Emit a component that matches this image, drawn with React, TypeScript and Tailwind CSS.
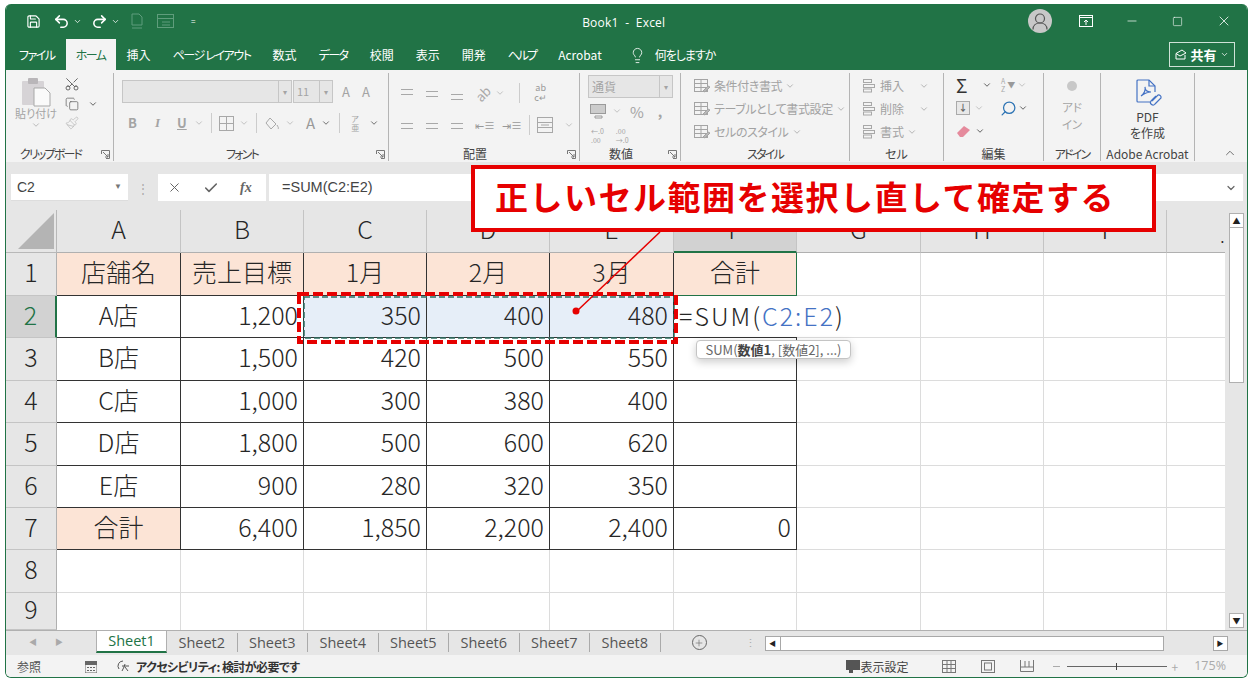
import type { ReactNode } from "react";
import {
  Check,
  ChevronDown,
  ChevronUp,
  Copy,
  Lightbulb,
  Minus,
  Paintbrush,
  Plus,
  Redo2,
  Save,
  Scissors,
  Search,
  Square,
  Undo2,
  X,
} from "lucide-react";

const colWidths = [51, 124, 123, 123, 123, 124, 123, 124, 123, 123, 58];
const rowHeights = [43, 42, 43, 42, 43, 42, 42, 43, 37];
const colNames = ["A", "B", "C", "D", "E", "F", "G", "H", "I", "."];

const tableRows = [
  ["店舗名", "売上目標", "1月", "2月", "3月", "合計"],
  ["A店", "1,200", "350", "400", "480", ""],
  ["B店", "1,500", "420", "500", "550", ""],
  ["C店", "1,000", "300", "380", "400", ""],
  ["D店", "1,800", "500", "600", "620", ""],
  ["E店", "900", "280", "320", "350", ""],
  ["合計", "6,400", "1,850", "2,200", "2,400", "0"],
];

// kana tabs are squeezed to the narrower width of the real ribbon font
const tabs = [
  { name: "ホーム", cls: "tracking-[-1.500px]" },
  { name: "挿入", cls: "" },
  { name: "ページ レイアウト", cls: "tracking-[-1.400px]" },
  { name: "数式", cls: "" },
  { name: "データ", cls: "tracking-[-1.500px]" },
  { name: "校閲", cls: "" },
  { name: "表示", cls: "" },
  { name: "開発", cls: "" },
  { name: "ヘルプ", cls: "tracking-[-2px]" },
  { name: "Acrobat", cls: "" },
];
const sheets = ["Sheet2", "Sheet3", "Sheet4", "Sheet5", "Sheet6", "Sheet7", "Sheet8"];

function Chev({ className = "text-[#8a8a8a]" }: { className?: string }) {
  return <ChevronDown size={10} strokeWidth={2} className={`shrink-0 ${className}`} />;
}

function Launcher() {
  return (
    <svg width="9" height="9" viewBox="0 0 9 9" className="absolute right-[3px] bottom-[2px] text-[#777]" fill="none" stroke="currentColor">
      <path d="M.5 4V.5H8.500V8.500H5" />
      <path d="M2 2l5 5M7 4v3H4" />
    </svg>
  );
}

function Group({
  width,
  label,
  launcher,
  squeeze,
  children,
}: {
  width: number;
  label: string;
  launcher?: boolean;
  squeeze?: boolean;
  children: ReactNode;
}) {
  return (
    <div className="relative flex h-[88px] shrink-0 flex-col border-r border-[#b4b4b4]" style={{ width }}>
      <div className="min-h-0 flex-1">{children}</div>
      <div
        className={`h-[14px] whitespace-nowrap text-center text-[12px] leading-[14px] text-[#444] ${launcher ? "pr-[18px]" : ""} ${
          squeeze ? "tracking-[-1.800px]" : ""
        }`}
      >
        {label}
      </div>
      {launcher && <Launcher />}
    </div>
  );
}

function LinesIcon({ kind = "center" }: { kind?: "center" | "left" | "right" | "top" | "bottom" }) {
  const x = kind === "center" ? [1, 3, 1] : kind === "right" ? [1, 5, 1] : [1, 1, 1];
  const y = kind === "top" ? 2 : kind === "bottom" ? 7 : 4;
  return (
    <svg width="14" height="13" viewBox="0 0 14 13" className="text-[#a8a8a8]" stroke="currentColor">
      {[0, 2.500, 5].map((d, i) => (
        <path key={d} d={`M${x[i]} ${y + d}.5H${kind === "center" || kind === "top" || kind === "bottom" ? 14 - x[i] : i === 1 && kind === "left" ? 9 : 13}`} />
      ))}
    </svg>
  );
}

function StyleIcon() {
  return (
    <svg width="18" height="16" viewBox="0 0 18 16" fill="none" stroke="#a4a4a4" className="shrink-0">
      <rect x="1.500" y="1.500" width="13" height="12" />
      <path d="M1.500 5.500h13M1.500 9.500h13M8 1.500v12" />
      <path d="M10 13l5-5 2 1-5 5z" fill="#b8b8b8" />
    </svg>
  );
}

function CellIcon() {
  return (
    <svg width="15" height="15" viewBox="0 0 15 15" fill="none" stroke="#a8a8a8" className="shrink-0">
      <rect x="1.500" y="1.500" width="8" height="3" />
      <rect x="1.500" y="6.500" width="11" height="3" />
      <rect x="1.500" y="11" width="8" height="3" />
    </svg>
  );
}

function StyleRow({ label }: { label: string }) {
  return (
    <div className="flex h-[23px] items-center gap-[3px] whitespace-nowrap text-[12px] tracking-[-0.400px] text-[#a2a2a2]">
      <StyleIcon />
      <span>{label}</span>
      <Chev className="text-[#a8a8a8]" />
    </div>
  );
}

function CellRow({ label, wide }: { label: string; wide?: boolean }) {
  return (
    <div className="flex h-[23px] items-center gap-[3px] whitespace-nowrap text-[12px] text-[#a2a2a2]">
      <CellIcon />
      <span>{label}</span>
      <span className={wide ? "ml-[12px]" : ""}>
        <Chev className="text-[#a8a8a8]" />
      </span>
    </div>
  );
}

function Ribbon() {
  return (
    <div className="flex h-[92px] bg-[#f3f3f3] pt-[3px] [font-feature-settings:'palt']">
      <Group width={108} label="クリップボード" launcher squeeze>
        <div className="flex h-full pl-[8px] text-[#a4a4a4]">
          <div className="flex w-[44px] flex-col items-center pt-[4px]">
            <svg width="32" height="30" viewBox="0 0 32 30">
              <rect x="2" y="4" width="22" height="24" rx="1" fill="#d6d3d6" />
              <rect x="8" y="1" width="10" height="6" rx="1" fill="#b9b6b9" />
              <path d="M14 11h11l5 5v13H14z" fill="#fafafa" stroke="#a8a8a8" />
            </svg>
            <span className="text-[11px] leading-[13px] whitespace-nowrap">貼り付け</span>
            <Chev className="text-[#b0b0b0]" />
          </div>
          <div className="ml-[6px] flex flex-col items-center gap-[5px] pt-[3px]">
            <Scissors size={16} strokeWidth={1.300} className="text-[#555] -rotate-90" />
            <Copy size={14} strokeWidth={1.300} className="text-[#666]" />
            <Paintbrush size={14} strokeWidth={1.300} className="text-[#bbb]" />
          </div>
          <div className="ml-[8px] pt-[26px]">
            <Chev className="text-[#444]" />
          </div>
        </div>
      </Group>

      <Group width={275} label="フォント" launcher squeeze>
        <div className="pl-[8px] pt-[7px] text-[#a4a4a4]">
          <div className="flex h-[23px] items-center">
            <div className="flex h-[23px] w-[170px] justify-end border border-[#c6c6c6] bg-[#e6e6e6]">
              <div className="flex w-[13px] items-center justify-center border-l border-[#c6c6c6] text-[8px]">▾</div>
            </div>
            <div className="ml-[1px] flex h-[23px] w-[40px] items-center justify-between border border-[#c6c6c6] bg-[#e6e6e6] pl-[3px] text-[11px]">
              <span>11</span>
              <span className="flex h-full w-[13px] items-center justify-center border-l border-[#c6c6c6] text-[8px]">▾</span>
            </div>
            <span className="ml-[9px] text-[13px]">A</span>
            <span className="ml-[12px] text-[13px]">A</span>
          </div>
          <div className="mt-[9px] flex h-[22px] items-center text-[13px]">
            <b className="w-[27px] pl-[6px]">B</b>
            <i className="w-[25px] pl-[6px] font-['Liberation_Serif',serif] font-bold">I</i>
            <u className="w-[20px] pl-[3px] font-bold">U</u>
            <Chev className="text-[#b8b8b8]" />
            <span className="mx-[7px] h-[20px] w-px bg-[#ccc]" />
            <svg width="15" height="15" viewBox="0 0 15 15" fill="none" stroke="#a8a8a8">
              <rect x=".5" y=".5" width="14" height="14" />
              <path d="M7.500 1v13M1 7.500h13" />
            </svg>
            <span className="ml-[5px]"><Chev className="text-[#b8b8b8]" /></span>
            <span className="mx-[7px] h-[20px] w-px bg-[#ccc]" />
            <svg width="16" height="15" viewBox="0 0 16 15" fill="none" stroke="#a8a8a8">
              <path d="M6 2l6 6-5 5-5-6z" />
              <path d="M13 9c1 2 2 3 1 4" />
            </svg>
            <span className="ml-[5px]"><Chev className="text-[#b8b8b8]" /></span>
            <b className="ml-[11px] text-[15px] font-normal text-[#999]">A</b>
            <span className="ml-[6px]"><Chev className="text-[#555]" /></span>
            <span className="mx-[8px] h-[20px] w-px bg-[#ccc]" />
            <span className="flex w-[14px] flex-col items-center text-[8px] leading-[9px]"><span>ア</span><span>亜</span></span>
            <span className="ml-[7px]"><Chev className="text-[#555]" /></span>
          </div>
        </div>
      </Group>

      <Group width={191} label="配置" launcher>
        <div className="pt-[8px] pl-[11px]">
          <div className="flex h-[24px] items-center gap-[11px]">
            <LinesIcon kind="top" />
            <LinesIcon kind="center" />
            <LinesIcon kind="bottom" />
            <span className="text-[13px] leading-none text-[#a8a8a8] -rotate-45">ab</span>
            <span className="-ml-[6px]"><Chev className="text-[#b8b8b8]" /></span>
            <span className="mx-[3px] h-[20px] w-px bg-[#ccc]" />
            <span className="flex flex-col items-center text-[9px] leading-[10px] text-[#999]"><span>ab</span><span>c↵</span></span>
          </div>
          <div className="mt-[9px] flex h-[22px] items-center gap-[11px]">
            <LinesIcon kind="left" />
            <LinesIcon kind="center" />
            <LinesIcon kind="right" />
            <span className="text-[11px] leading-none text-[#999]">⇤≡</span>
            <span className="-ml-[4px] text-[11px] leading-none text-[#999]">⇥≡</span>
            <span className="-ml-[4px] h-[20px] w-px bg-[#ccc]" />
            <svg width="16" height="16" viewBox="0 0 16 16" fill="none" stroke="#a8a8a8" className="-ml-[4px]">
              <rect x=".5" y=".5" width="15" height="15" />
              <path d="M1 5.500h14M1 10.500h14M4 8h8" />
            </svg>
            <Chev className="text-[#b8b8b8]" />
          </div>
        </div>
      </Group>

      <Group width={101} label="数値" launcher>
        <div className="pl-[8px] pt-[2px] text-[#a4a4a4]">
          <div className="flex h-[23px] w-[85px] items-center justify-between border border-[#c6c6c6] bg-[#e6e6e6] pl-[3px] text-[12px]">
            <span>通貨</span>
            <span className="flex h-full w-[13px] items-center justify-center border-l border-[#c6c6c6] text-[8px]">▾</span>
          </div>
          <div className="mt-[2px] flex h-[22px] items-center pl-[2px]">
            <svg width="16" height="15" viewBox="0 0 16 15" fill="none" stroke="#9a9a9a"><rect x=".5" y=".5" width="15" height="9" fill="#ccc" /><path d="M5 12h7v2H5z" /></svg>
            <span className="ml-[6px]"><Chev className="text-[#b8b8b8]" /></span>
            <span className="ml-[8px] text-[15px] leading-none">%</span>
            <span className="ml-[14px] text-[14px] font-bold leading-none">,</span>
          </div>
          <div className="mt-[2px] flex h-[24px] items-center gap-[12px] pl-[3px] text-[7px] leading-[9px]">
            <span className="flex flex-col"><span>←.0</span><span>.00</span></span>
            <span className="flex flex-col"><span>.00</span><span>→.0</span></span>
          </div>
        </div>
      </Group>

      <Group width={169} label="スタイル" squeeze>
        <div className="pl-[12px] pt-[1px]">
          <StyleRow label="条件付き書式" />
          <StyleRow label="テーブルとして書式設定" />
          <StyleRow label="セルのスタイル" />
        </div>
      </Group>

      <Group width={94} label="セル">
        <div className="pl-[12px] pt-[1px]">
          <CellRow label="挿入" wide />
          <CellRow label="削除" wide />
          <CellRow label="書式" />
        </div>
      </Group>

      <Group width={100} label="編集">
        <div className="pl-[12px]">
          <div className="flex h-[23px] items-center">
            <span className="w-[20px] text-[19px] leading-none text-[#333]">Σ</span>
            <span className="ml-[6px]"><Chev className="text-[#444]" /></span>
            <span className="ml-[9px] flex flex-col text-[7px] leading-[8px] text-[#aaa]"><span>A</span><span>Z</span></span>
            <span className="ml-[2px] text-[8px] text-[#999]">▼</span>
            <span className="ml-[2px]"><Chev className="text-[#b8b8b8]" /></span>
          </div>
          <div className="flex h-[24px] items-center">
            <span className="flex h-[14px] w-[14px] items-center justify-center border border-[#aaa] bg-[#e8e8e8] text-[9px] font-bold text-[#666]">↓</span>
            <span className="ml-[4px]"><Chev className="text-[#b8b8b8]" /></span>
            <Search size={17} strokeWidth={1.800} className="ml-[16px] -scale-x-100 text-[#2f75b5]" />
            <span className="ml-[1px]"><Chev className="text-[#444]" /></span>
          </div>
          <div className="flex h-[22px] items-center">
            <svg width="15" height="13" viewBox="0 0 15 13"><path d="M1 8l7-7 6 4-7 7H4z" fill="#e58a9c" /></svg>
            <span className="ml-[4px]"><Chev className="text-[#444]" /></span>
          </div>
        </div>
      </Group>

      <Group width={57} label="アドイン" squeeze>
        <div className="flex flex-col items-center pt-[8px] text-[11.500px] leading-[17px] text-[#a4a4a4]">
          <span className="mb-[8px] h-[10px] w-[10px] rounded-full bg-[#c8c8c8]" />
          <span>アド</span>
          <span>イン</span>
        </div>
      </Group>

      <Group width={94} label="Adobe Acrobat">
        <div className="flex flex-col items-center pt-[6px] text-[12px] leading-[16px] text-[#444]">
          <svg width="30" height="29" viewBox="0 0 30 29" fill="none" stroke="#4472c4" strokeWidth="1.200" className="mb-[1px]">
            <path d="M17 23H5a1 1 0 0 1-1-1V2a1 1 0 0 1 1-1h11l6 6v6" />
            <path d="M16 1v6h6" />
            <path d="M8 17c3-2 5-6 4-9 0 3 2 5 6 5-3 0-6 1-10 4z" />
            <path d="M19 22l6-6a2.500 2.500 0 0 1 3 3l-6 6a2.500 2.500 0 0 1-4-3l5-5" />
          </svg>
          <span>PDF</span>
          <span>を作成</span>
        </div>
      </Group>

      <div className="flex flex-1 items-end justify-end pb-[2px] pr-[10px]">
        <ChevronUp size={14} strokeWidth={1.400} className="text-[#555]" />
      </div>
    </div>
  );
}

function TitleBar() {
  return (
    <div className="relative flex h-[34px] items-center bg-[#217346] pl-[20px] pr-[15px] text-white">
      <Save size={15} strokeWidth={1.800} />
      <Undo2 size={17} strokeWidth={2.200} className="ml-[12px]" />
      <ChevronDown size={9} className="ml-[3px]" />
      <Redo2 size={17} strokeWidth={2.200} className="ml-[9px]" />
      <ChevronDown size={9} className="ml-[3px]" />
      <svg width="14" height="16" viewBox="0 0 14 16" fill="none" stroke="#5f9d7c" className="ml-[10px]">
        <path d="M2 1h7l3 3v8H2zM2 15h10" />
      </svg>
      <svg width="17" height="14" viewBox="0 0 17 14" fill="none" stroke="#5f9d7c" className="ml-[13px]">
        <rect x=".5" y=".5" width="16" height="13" />
        <path d="M1 4.500h15M5 8h8M5 11h8" />
      </svg>
      <span className="ml-[17px] text-[8px] leading-none">=</span>
      <span className="flex-1 pl-[24px] pt-[3px] text-center font-['Open_Sans',sans-serif] text-[12px] tracking-[0.2px]">Book1&nbsp; -&nbsp; Excel</span>
      <span className="flex h-[24px] w-[24px] items-center justify-center rounded-full bg-[#c8c8c8]">
        <svg width="16" height="17" viewBox="0 0 16 17" fill="none" stroke="#555" strokeWidth="1.200">
          <circle cx="8" cy="5.500" r="4.500" />
          <path d="M1 16.500c0-4 3-6.500 7-6.500s7 2.500 7 6.500" />
        </svg>
      </span>
      <svg width="14" height="12" viewBox="0 0 14 12" fill="none" stroke="white" className="ml-[27px]">
        <rect x=".5" y=".5" width="13" height="11" />
        <path d="M1 2.500h12" />
        <path d="M7 10V5M5 7l2-2 2 2" />
      </svg>
      <Minus size={14} strokeWidth={1.200} className="ml-[32px]" />
      <Square size={11} strokeWidth={1.300} className="ml-[33px]" />
      <X size={16} strokeWidth={1.200} className="ml-[33px]" />
    </div>
  );
}

function TabBar() {
  return (
    <div className="flex h-[32px] items-end bg-[#217346] pl-[2px] pr-[12px] text-[12px] text-white [font-feature-settings:'palt']">
      <span className="h-[28px] px-[11px] leading-[26px] tracking-[-1.500px]">ファイル</span>
      <div className="flex items-end">
        {tabs.map((tab, i) => (
          <span
            key={tab.name}
            className={`${
              i === 0
                ? "h-[31px] w-[50px] bg-[#f3f3f3] text-center leading-[31px] text-[#217346]"
                : "h-[28px] whitespace-nowrap px-[11px] leading-[26px]"
            } ${tab.cls}`}
          >
            {tab.name}
          </span>
        ))}
      </div>
      <div className="ml-[16px] flex h-[28px] items-center pb-[2px]">
        <Lightbulb size={17} strokeWidth={1.200} />
        <span className="ml-[9px] tracking-[-1px]">何をしますか</span>
      </div>
      <div className="mb-[3px] ml-auto flex h-[25px] w-[66px] items-center justify-center gap-[3px] border border-[#cfe2d7] text-[13px] font-bold">
        <svg width="12" height="11" viewBox="0 0 12 11" fill="none" stroke="white"><path d="M1 4.500V10h9V6M1 4.500l6-3.500 4 3-6 3z" /></svg>
        <span>共有</span>
        <ChevronDown size={9} />
      </div>
    </div>
  );
}

function FormulaBar() {
  return (
    <div className="flex h-[48px] items-start bg-[#e6e6e6] pt-[12px] pl-[5px] pr-[4px]">
      <div className="flex h-[27px] w-[117px] items-center justify-between border-b border-[#ddd] bg-white pl-[6px] pr-[6px] font-['Liberation_Sans',sans-serif] text-[14px] text-[#444]">
        <span>C2</span>
        <span className="text-[8px] text-[#777]">▼</span>
      </div>
      <div className="mx-[13px] flex h-[27px] w-[4px] items-center justify-center text-[#aaa]">
        <span className="text-[12px] leading-none">⋮</span>
      </div>
      <div className="flex h-[27px] w-[108px] items-center bg-white pl-[9px] text-[#666]">
        <X size={15} strokeWidth={1.600} />
        <Check size={16} strokeWidth={2.400} className="ml-[21px]" />
        <i className="ml-[21px] font-['Liberation_Serif',serif] text-[14px] font-bold">fx</i>
      </div>
      <div className="ml-[3px] flex h-[27px] flex-1 items-center justify-between bg-white pl-[13px] pr-[6px] font-['Liberation_Sans',sans-serif] text-[14.500px] text-[#444]">
        <span>=SUM(C2:E2)</span>
        <ChevronDown size={12} strokeWidth={2.400} className="text-[#666]" />
      </div>
    </div>
  );
}

function SheetGrid() {
  const gridCols = colWidths.map((w) => `${w}px`).join(" ");
  const gridRows = [43, ...rowHeights].map((h) => `${h}px`).join(" ");
  return (
    <div className="grid text-[25px] font-light text-[#262626]" style={{ gridTemplateColumns: gridCols, gridTemplateRows: gridRows }}>
      <div className="flex items-end justify-end border-r border-b border-[#b8b8b8] bg-[#e6e6e6] pb-[3px] pr-[2px]">
        <svg width="36" height="36" viewBox="0 0 36 36"><path d="M36 0v36H0z" fill="#b4b4b4" /></svg>
      </div>
      {colNames.map((name) => (
        <div
          key={name}
          className={`flex overflow-hidden border-r border-[#c4c4c4] ${
            name === "." ? "items-end justify-end border-r-0 pb-[6px] pr-[1px] text-[10px] font-bold leading-[14px]" : "items-center justify-center pb-[4px]"
          } ${name === "F" ? "border-b-2 border-b-[#217346] bg-[#d2d2d2]" : "border-b border-b-[#b0b0b0] bg-[#e6e6e6]"}`}
        >
          {name}
        </div>
      ))}

      {rowHeights.map((_, r) => (
        <GridRow key={r} r={r} />
      ))}
    </div>
  );
}

function GridRow({ r }: { r: number }) {
  const values = tableRows[r];
  return (
    <>
      <div
        className={`flex items-center justify-center border-b border-[#c4c4c4] pb-[4px] ${
          r === 1 ? "border-r-2 border-r-[#217346] bg-[#d2d2d2] text-[#217346]" : "border-r border-r-[#b0b0b0] bg-[#e6e6e6]"
        }`}
      >
        {r + 1}
      </div>
      {Array.from({ length: 10 }).map((_, c) => {
        const v = values?.[c];
        if (values && c < 6) {
          const center = r === 0 || c === 0;
          const peach = r === 0 || (r === 6 && c === 0);
          const selected = r === 1 && c >= 2 && c <= 4;
          return (
            <div
              key={c}
              className={`flex items-center whitespace-nowrap border-b border-[#333] pb-[4px] ${
                c === 5 && r === 1 ? "border-r-0" : "border-r"
              } ${center ? "justify-center" : "justify-end pr-[5px]"} ${
                peach ? "bg-[#fce4d6]" : selected ? "bg-[#e6eef8]" : "bg-white"
              } ${r === 0 && c === 5 ? "border-b-[#217346] border-r-[#217346]" : ""}`}
            >
              {c === 5 && r === 1 ? <FormulaCell /> : v}
            </div>
          );
        }
        return (
          <div
            key={c}
            className={`border-b border-r border-[#dcdcdc] bg-white ${r === 8 ? "border-b-0" : ""} ${c === 9 ? "border-r-0" : ""}`}
          />
        );
      })}
    </>
  );
}

function FormulaCell() {
  return (
    <div className="relative z-10 w-full self-stretch pl-[5px] leading-[38px] tracking-[2px]">
      =SUM(<span className="text-[#4472c4]">C2:E2</span>)
    </div>
  );
}

function VScroll() {
  return (
    <div className="flex h-[420px] w-[23px] flex-col bg-[#e6e6e6] pl-[4px] pt-[3px]">
      <div className="flex h-[15px] w-[15px] items-center justify-center border border-[#b0b0b0] bg-white text-[8px] leading-none text-[#222]">▲</div>
      <div className="h-[155px] w-[15px] border-x border-b border-[#b0b0b0] bg-white" />
      <div className="mt-auto mb-[2px] flex h-[15px] w-[15px] items-center justify-center border border-[#b0b0b0] bg-white text-[8px] leading-none text-[#222]">▼</div>
    </div>
  );
}

function SheetTabs() {
  return (
    <div className="flex h-[25px] items-start border-t border-[#b0b0b0] bg-[#e6e6e6] text-[14.500px]">
      <div className="flex h-[22px] w-[90px] items-center gap-[18px] pl-[23px] text-[8px] text-[#aaa]">
        <span>◀</span>
        <span>▶</span>
      </div>
      <div className="flex h-[22px] w-[71px] items-center justify-center border-x border-b-2 border-[#b0b0b0] border-b-[#217346] bg-white font-['Open_Sans',sans-serif] text-[#217346]">
        Sheet1
      </div>
      {sheets.map((s) => (
        <div key={s} className="mt-[2px] flex h-[19px] w-[70.500px] items-center justify-center border-r border-[#aaa] font-['Open_Sans',sans-serif] text-[#555]">
          {s}
        </div>
      ))}
      <div className="ml-[31px] mt-[4px] flex h-[15px] w-[15px] items-center justify-center rounded-full border border-[#666] text-[#666]">
        <Plus size={10} strokeWidth={1.500} />
      </div>
      <span className="ml-[38px] mt-[4px] text-[11px] leading-[14px] text-[#aaa]">⋮</span>
      <div className="ml-[9px] mt-[5px] flex h-[15px] w-[399px] items-center border border-[#a8a8a8] bg-white">
        <span className="flex h-full w-[15px] items-center justify-center border-r border-[#a8a8a8] text-[7px] text-[#222]">◀</span>
      </div>
      <div className="ml-[49px] mt-[5px] flex h-[15px] w-[15px] items-center justify-center border border-[#a8a8a8] bg-white text-[7px] text-[#222]">▶</div>
    </div>
  );
}

function StatusBar() {
  return (
    <div className="flex h-[23px] items-center bg-[#f3f3f3] pl-[11px] text-[12px] text-[#555] [font-feature-settings:'palt']">
      <span>参照</span>
      <svg width="12" height="12" viewBox="0 0 12 12" className="ml-[44px]" fill="#666"><rect y="2" width="12" height="10" fill="none" stroke="#666" /><rect width="12" height="4" /><path d="M2 6h2v1H2zM5 6h2v1H5zM8 6h2v1H8zM2 9h2v1H2zM5 9h2v1H5zM8 9h2v1H8z" /></svg>
      <svg width="15" height="15" viewBox="0 0 15 15" fill="none" stroke="#555" className="ml-[19px]">
        <path d="M7 2a5 5 0 0 0-4 8" />
        <path d="M9 5l-1 3-2 4M9 8l3 4M6 7h7" />
      </svg>
      <span className="ml-[5px] font-bold tracking-[-0.600px] text-[#333]">アクセシビリティ: 検討が必要です</span>
      <div className="ml-auto flex items-center pr-[21px]">
        <svg width="15" height="14" viewBox="0 0 15 14" fill="#555"><path d="M0 0h14v10H7v3H3v-3H0z" /></svg>
        <span className="text-[12px] text-[#444]">表示設定</span>
        <svg width="14" height="13" viewBox="0 0 14 13" fill="none" stroke="#777" className="ml-[33px]">
          <rect x=".5" y=".5" width="13" height="12" />
          <path d="M5 1v11M9 1v11M1 4.500h12M1 8.500h12" />
        </svg>
        <svg width="14" height="13" viewBox="0 0 14 13" fill="none" stroke="#777" className="ml-[25px]">
          <rect x=".5" y=".5" width="13" height="12" />
          <rect x="3.500" y="3" width="7" height="7" />
        </svg>
        <svg width="14" height="13" viewBox="0 0 14 13" fill="none" stroke="#777" className="ml-[25px]">
          <path d="M.5 0v11.500h13V0M5 1v6M9 1v6M1 7h12" />
        </svg>
        <span className="ml-[19px] h-px w-[7px] bg-[#aaa]" />
        <div className="relative ml-[7px] h-px w-[100px] bg-[#666]">
          <span className="absolute left-[49px] top-[-3px] h-[7px] w-px bg-[#444]" />
        </div>
        <span className="ml-[5px] text-[12px] text-[#aaa]">+</span>
        <span className="ml-[16px] font-['Open_Sans',sans-serif] text-[12.500px] text-[#aaa]">175%</span>
      </div>
    </div>
  );
}

export default function App() {
  return (
    <div className="relative h-[685px] w-[1253px] overflow-hidden bg-white pl-[5px] pt-[4px] font-['Noto_Sans_CJK_JP',sans-serif]">
      <div className="h-[674px] w-[1243px] overflow-hidden rounded-[6px] border-x border-b border-[#217346]">
        <TitleBar />
        <TabBar />
        <Ribbon />
        <FormulaBar />
        <div className="flex">
          <SheetGrid />
          <VScroll />
        </div>
        <SheetTabs />
        <StatusBar />
      </div>

      {/* callout and annotation overlays */}
      <div className="absolute left-[471px] top-[165px] flex h-[67px] w-[685px] items-center justify-center border-4 border-[#e60000] bg-white pb-[3px] pr-[17px] text-[33px] font-bold tracking-[1.500px] text-[#e60000]">
        正しいセル範囲を選択し直して確定する
      </div>

      <svg className="pointer-events-none absolute left-0 top-0" width="1253" height="685" fill="none">
        <rect x="304" y="297" width="370" height="41" stroke="#2f6f62" strokeWidth="1.500" strokeDasharray="6 3" />
        <rect x="299" y="294" width="377" height="48" stroke="#e60000" strokeWidth="4" strokeDasharray="10 4" />
        <path d="M660 232L577 311" stroke="#e60000" strokeWidth="1.500" />
        <circle cx="576" cy="311" r="3.500" fill="#e60000" />
      </svg>

      <div className="absolute left-[696px] top-[340px] flex h-[19px] w-[155px] items-center justify-center rounded-[4px] border border-[#c4c4c4] bg-white text-[13px] text-[#666] shadow-[0_3px_8px_rgba(0,0,0,0.2)]">
        SUM(<b className="text-[#444]">数値1</b>, [数値2], ...)
      </div>
    </div>
  );
}
